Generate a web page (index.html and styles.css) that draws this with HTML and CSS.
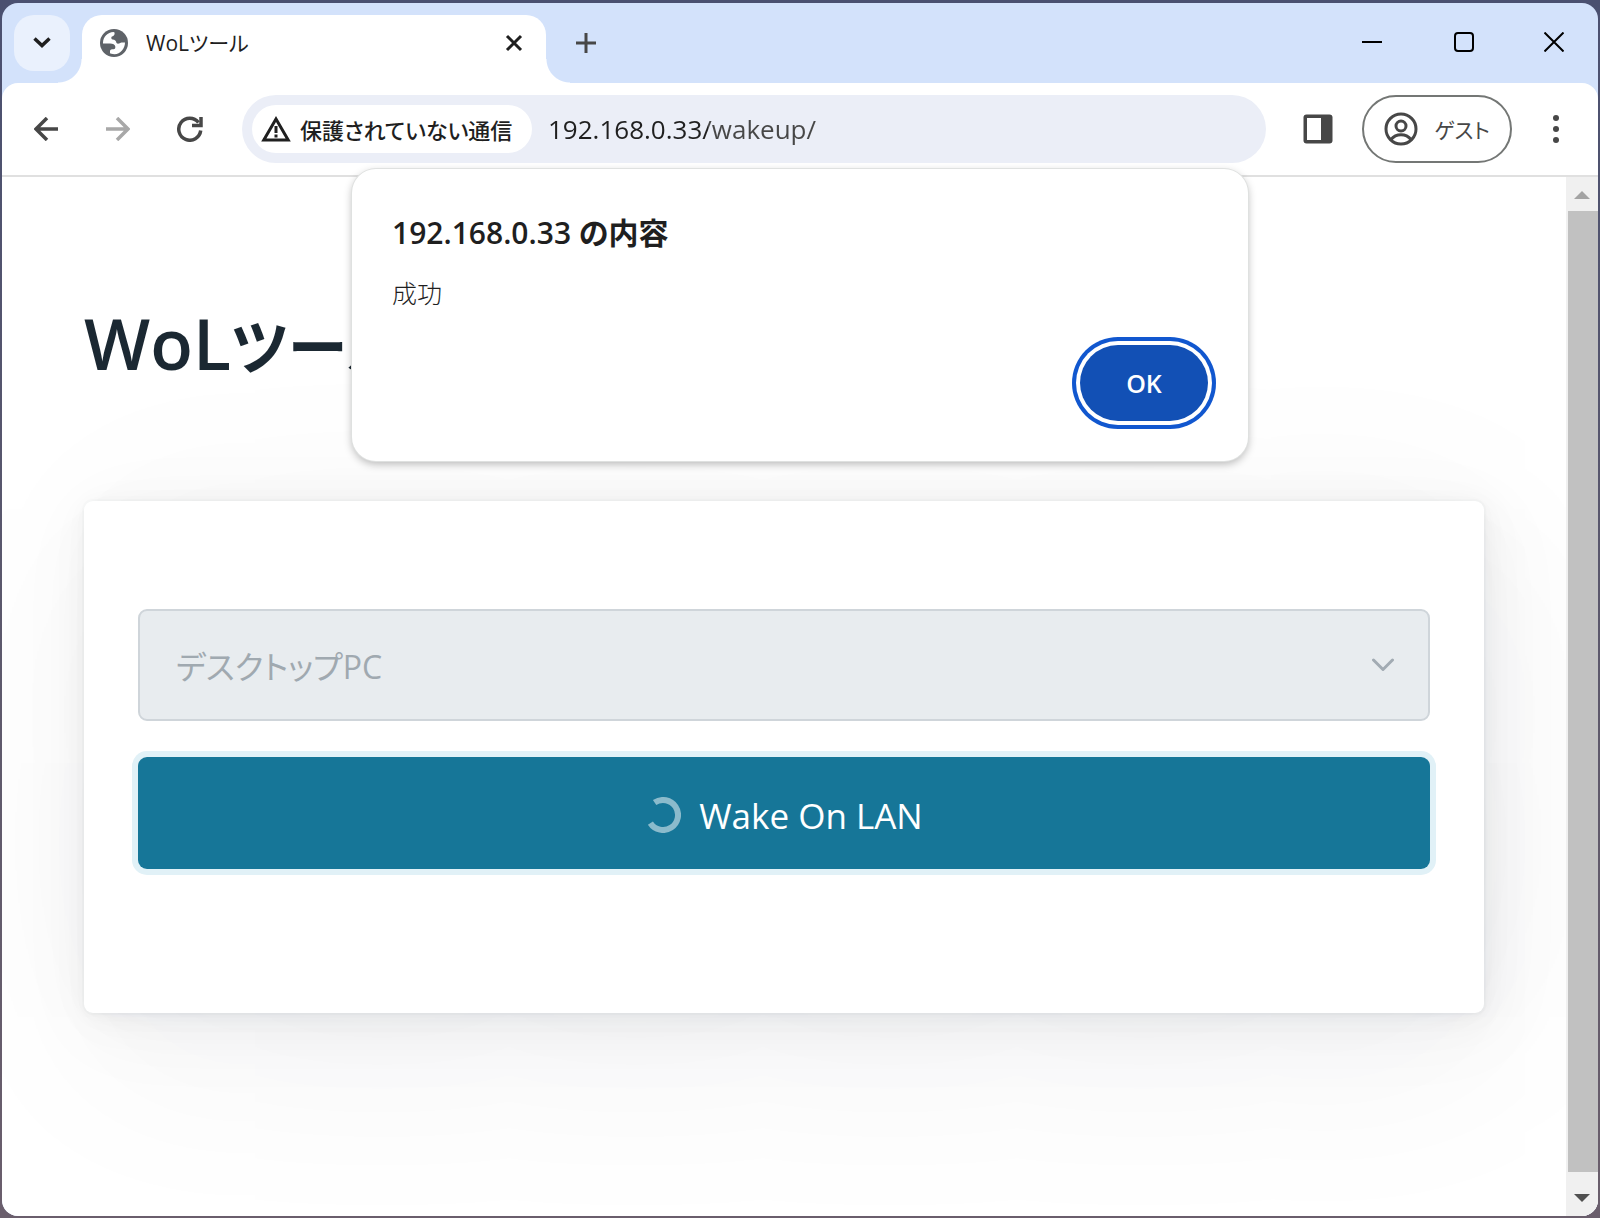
FILE: index.html
```html
<!DOCTYPE html>
<html lang="ja">
<head>
<meta charset="utf-8">
<meta name="viewport" content="width=device-width, initial-scale=1">
<title>WoLツール</title>
<link rel="stylesheet" href="styles.css">
</head>
<body>
<div class="window">
  <header class="titlebar">
    <button class="tab-search" type="button" aria-label="タブを検索">
      <svg width="18" height="12" viewBox="0 0 18 12"><path d="M1.500 1.500 9 8.500l7.500-7" fill="none" stroke="#1f1f1f" stroke-width="3.500"/></svg>
    </button>
    <div class="tab">
      <svg class="tab-icon" width="28" height="28" viewBox="0 0 28 28">
        <circle cx="14" cy="14" r="14" fill="#5f6368"/>
        <path d="M3 13.500C3.200 8 7.500 3.300 13.500 3L14.500 3.500C15 5.500 14 7 12 7.500C11 8 11 10 12.500 10.500C15 10.500 16 12 16.500 14C18 15.500 20 14 21.500 13.500L25 13.500C25 19.500 20.500 25 14.500 25.200C12 25 10.500 24.600 10 24.300V22C10 20.500 12 20.300 13.500 20.300C15 20.300 15.500 19 15.300 17.500C15 15.500 13 14.500 10 14.500H3Z" fill="#fff"/>
      </svg>
      <span class="tab-title">WoLツール</span>
      <button class="tab-close" type="button" aria-label="閉じる">
        <svg width="18" height="18" viewBox="0 0 18 18"><path d="M2 2l14 14M16 2 2 16" stroke="#1f1f1f" stroke-width="3"/></svg>
      </button>
    </div>
    <button class="new-tab" type="button" aria-label="新しいタブ">
      <svg width="20" height="20" viewBox="0 0 20 20"><path d="M10 0v20M0 10h20" stroke="#474747" stroke-width="3"/></svg>
    </button>
    <div class="window-controls">
      <button type="button" aria-label="最小化"><svg width="20" height="20" viewBox="0 0 20 20"><path d="M0 10h20" stroke="#000" stroke-width="2"/></svg></button>
      <button type="button" aria-label="最大化"><svg width="20" height="20" viewBox="0 0 20 20"><rect x="1" y="1" width="18" height="18" rx="3" fill="none" stroke="#000" stroke-width="2"/></svg></button>
      <button type="button" aria-label="ウィンドウを閉じる"><svg width="20" height="20" viewBox="0 0 20 20"><path d="M.5.5l19 19M19.500.5l-19 19" stroke="#000" stroke-width="2"/></svg></button>
    </div>
  </header>

  <div class="toolbar">
    <nav class="nav-buttons">
      <button type="button" aria-label="戻る"><svg width="24" height="24" viewBox="0 0 24 24"><path d="M24 12H2M13 1 2 12l11 11" fill="none" stroke="#474747" stroke-width="3.500"/></svg></button>
      <button type="button" aria-label="進む" disabled><svg width="24" height="24" viewBox="0 0 24 24"><path d="M0 12h22M11 1l11 11-11 11" fill="none" stroke="#a8a8a8" stroke-width="3.500"/></svg></button>
      <button type="button" aria-label="再読み込み"><svg width="26" height="26" viewBox="0 0 26 26"><path d="M23.700 14.500A11 11 0 1 1 21.500 6.500" fill="none" stroke="#474747" stroke-width="3.500"/><path d="M24 1v8.500h-9" fill="none" stroke="#474747" stroke-width="3.500"/></svg></button>
    </nav>
    <div class="omnibox">
      <button class="security-chip" type="button">
        <svg width="30" height="26" viewBox="0 0 30 26"><path d="M15 3 2.800 24h24.400Z" fill="none" stroke="#1f1f1f" stroke-width="3"/><path d="M15 10v7M15 18.500v3" stroke="#1f1f1f" stroke-width="3"/></svg>
        <span>保護されていない通信</span>
      </button>
      <input class="address" type="text" aria-label="アドレス" value="192.168.0.33/wakeup/">
    </div>
    <button class="side-panel" type="button" aria-label="サイドパネル">
      <svg width="30" height="30" viewBox="0 0 30 30"><rect x=".5" y=".5" width="29" height="29" rx="3" fill="#474747"/><path d="M4 4h14v22H4Z" fill="#fff"/></svg>
    </button>
    <button class="profile" type="button">
      <svg width="34" height="34" viewBox="0 0 34 34" fill="none" stroke="#474747" stroke-width="3"><circle cx="17" cy="17" r="15"/><circle cx="17" cy="14" r="5"/><path d="M7 27.500c5-6.500 15-6.500 20 0"/></svg>
      <span>ゲスト</span>
    </button>
    <button class="menu" type="button" aria-label="メニュー">
      <svg width="6" height="28" viewBox="0 0 6 28" fill="#474747"><circle cx="3" cy="3" r="3"/><circle cx="3" cy="14" r="3"/><circle cx="3" cy="25" r="3"/></svg>
    </button>
  </div>

  <div class="viewport">
    <main class="page">
      <h1>WoL<span class="kana">ツール</span></h1>
      <form class="card">
        <select aria-label="端末" disabled><option>デスクトップPC</option></select>
        <button class="wake" type="button">
          <svg width="36" height="36" viewBox="0 0 36 36"><path d="M9.600 5.600A15 15 0 1 1 5.400 26.100" fill="none" stroke="#fff" stroke-opacity=".5" stroke-width="6"/></svg>
          Wake On LAN
        </button>
      </form>
    </main>
    <div class="scrollbar">
      <svg width="16" height="8" viewBox="0 0 16 8"><path d="M0 8 8 0l8 8Z" fill="#a3a3a3"/></svg>
      <div class="thumb"></div>
      <svg width="16" height="8" viewBox="0 0 16 8"><path d="M0 0l8 8 8-8Z" fill="#505050"/></svg>
    </div>
  </div>

  <dialog class="alert" open aria-labelledby="alert-title">
    <h2 id="alert-title">192.168.0.33 の内容</h2>
    <p>成功</p>
    <button type="button">OK</button>
  </dialog>
</div>
</body>
</html>
```
FILE: styles.css
```css
* {
  box-sizing: border-box;
}

body {
  margin: 0;
  min-height: 100vh;
  padding: 3px 2px 2px;
  display: grid;
  background: linear-gradient(#4a5070, #5f5a6c 60%, #6a5e6c);
  font-family: "Open Sans", "Noto Sans CJK JP", sans-serif;
  font-feature-settings: "palt";
  color: #1f1f1f;
}

button,
input,
select {
  margin: 0;
  padding: 0;
  border: 0;
  background: none;
  color: inherit;
  font: inherit;
  font-feature-settings: inherit;
}

button {
  display: flex;
  align-items: center;
  justify-content: center;
}

svg {
  display: block;
  flex: none;
}

.window {
  position: relative;
  display: flex;
  flex-direction: column;
  overflow: hidden;
  border-radius: 16px;
  background: #d3e2fb;
}

/* Title bar */

.titlebar {
  display: flex;
  height: 80px;
}

.tab-search {
  width: 56px;
  height: 56px;
  margin: 12px 12px 0;
  border-radius: 20px;
  background: #eaf1fd;
}

.tab {
  position: relative;
  flex: 0 1 464px;
  display: flex;
  align-items: center;
  margin-top: 12px;
  padding: 0 20px 12px 18px;
  border-radius: 20px 20px 0 0;
  background: #fff;
}

/* Concave feet on both sides of the active tab */
.tab::before,
.tab::after {
  content: "";
  position: absolute;
  bottom: 0;
  width: 24px;
  height: 24px;
}

.tab::before {
  right: 100%;
  background: radial-gradient(circle at 0 0, transparent 23px, #fff 24px);
}

.tab::after {
  left: 100%;
  background: radial-gradient(circle at 100% 0, transparent 23px, #fff 24px);
}

.tab-title {
  flex: 1;
  padding-left: 18px;
  font-size: 21px;
  line-height: 32px;
}

.tab-close {
  width: 24px;
  height: 24px;
}

.new-tab {
  width: 56px;
  height: 56px;
  margin: 12px 0 0 12px;
}

.window-controls {
  display: flex;
  height: 78px;
  margin-left: auto;
}

.window-controls button {
  width: 92px;
}

.window-controls button:last-child {
  width: 88px;
}

/* Toolbar */

.toolbar {
  display: flex;
  align-items: center;
  height: 94px;
  padding: 0 28px 0 8px;
  border-bottom: 2px solid #e0e0e0;
  border-radius: 16px 16px 0 0;
  background: #fff;
}

.nav-buttons {
  display: flex;
}

.nav-buttons button {
  width: 72px;
  height: 68px;
}

.omnibox {
  flex: 1;
  display: flex;
  align-items: center;
  height: 68px;
  margin-left: 16px;
  padding: 0 10px;
  border-radius: 34px;
  background: #ebeef7;
}

.security-chip {
  justify-content: flex-start;
  gap: 9px;
  flex: none;
  width: 280px;
  height: 48px;
  padding-left: 9px;
  border-radius: 24px;
  background: #fff;
  font-size: 22px;
  font-weight: 500;
}

.address {
  flex: 1;
  min-width: 0;
  height: 48px;
  margin-left: 16px;
  font-size: 26px;
  /* host name in near-black, path in grey */
  background: linear-gradient(90deg, #1f1f1f 160px, #474747 160px);
  background-clip: text;
  color: transparent;
}

.side-panel {
  width: 56px;
  height: 56px;
  margin: 0 16px 0 24px;
}

.profile {
  gap: 16px;
  width: 150px;
  height: 68px;
  border: 2px solid #747775;
  border-radius: 34px;
  color: #474747;
  font-size: 21px;
}

.menu {
  width: 28px;
  height: 56px;
  margin-left: 30px;
}

/* Page */

.viewport {
  flex: 1;
  display: flex;
  background: #fff;
}

.page {
  flex: 1;
  min-width: 0;
  overflow: hidden;
  padding: 112px 82px 180px;
}

.page h1 {
  margin: 0 0 104px;
  color: #1b2832;
  font-size: 70px;
  font-weight: 600;
  line-height: 108px;
}

.page h1 .kana {
  font-size: 60px;
  line-height: 1;
}

.card {
  display: flex;
  flex-direction: column;
  gap: 36px;
  padding: 108px 54px 144px;
  border-radius: 9px;
  background: #fff;
  box-shadow:
    1px 1px 6px rgba(27, 40, 50, 0.017),
    1px 2px 14px rgba(27, 40, 50, 0.024),
    2px 4px 27px rgba(27, 40, 50, 0.03),
    4px 8px 49px rgba(27, 40, 50, 0.036),
    8px 15px 90px rgba(27, 40, 50, 0.043),
    18px 36px 216px rgba(27, 40, 50, 0.06),
    0 0 0 2px rgba(27, 40, 50, 0.015);
}

.card select {
  appearance: none;
  height: 112px;
  padding: 2px 36px 0;
  border: 2px solid #cfd5da;
  border-radius: 9px;
  background: #e8ecef url("data:image/svg+xml,%3Csvg xmlns='http://www.w3.org/2000/svg' width='24' height='14' viewBox='0 0 24 14'%3E%3Cpath d='M2.500 2 12 11.500 21.500 2' fill='none' stroke='%23a2abb3' stroke-width='3' stroke-linecap='round' stroke-linejoin='round'/%3E%3C/svg%3E") no-repeat right 33px center;
  color: #a0a9b0;
  font-size: 32px;
  opacity: 1;
}

.wake {
  gap: 18px;
  height: 112px;
  padding-top: 4px;
  border-radius: 9px;
  background: #167698;
  box-shadow: 0 0 0 6px #e1f1f7;
  color: #fff;
  font-size: 35px;
}

.scrollbar {
  display: flex;
  flex-direction: column;
  align-items: center;
  gap: 12px;
  width: 32px;
  padding: 14px 0;
  background: #f0f0f0;
}

.thumb {
  flex: 1;
  align-self: stretch;
  margin: 0 0 10px 2px;
  background: #c1c1c1;
}

/* Alert box, hanging from the toolbar over the page */

.alert {
  position: absolute;
  top: 166px;
  display: flex;
  flex-direction: column;
  width: 896px;
  max-width: 100%;
  margin: 0 auto;
  padding: 40px;
  border: 0;
  border-radius: 24px;
  background: #fff;
  box-shadow: 0 0 0 1px #dfe1e0, 0 3px 8px rgba(0, 0, 0, 0.28);
  color: #1f1f1f;
}

.alert h2 {
  margin: 0;
  font-size: 30px;
  font-weight: 600;
  line-height: 48px;
}

.alert p {
  margin: 16px 0 32px;
  font-size: 25px;
  font-weight: 300;
  line-height: 40px;
}

.alert button {
  align-self: flex-end;
  width: 128px;
  height: 76px;
  border-radius: 38px;
  background: #1250b5;
  box-shadow: 0 0 0 4px #fff, 0 0 0 8px #1157cf;
  color: #fff;
  font-size: 25px;
  font-weight: 600;
}
```
